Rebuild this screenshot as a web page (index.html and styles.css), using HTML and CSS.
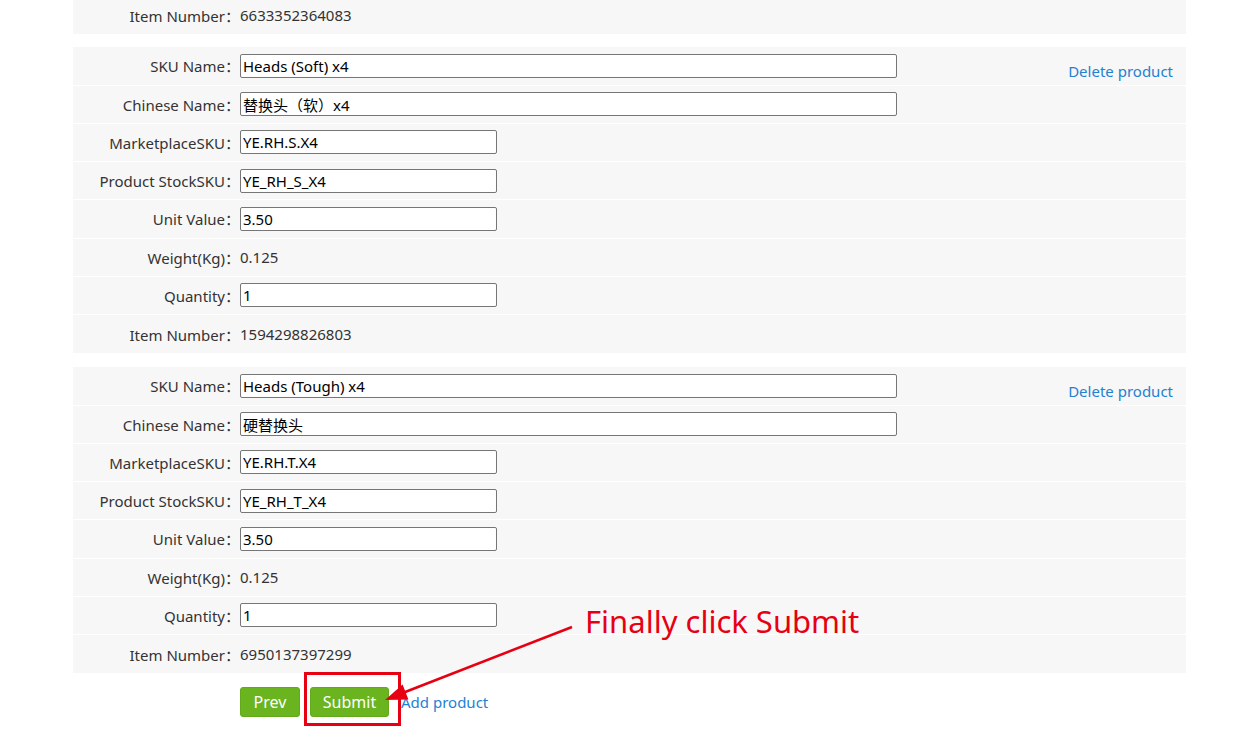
FILE: index.html
```html
<!DOCTYPE html>
<html lang="zh-CN">
<head>
    <meta charset="UTF-8">
    <title>Products</title>
    <link rel="stylesheet" href="styles.css">
</head>
<body>
    <div class="page">
        <div class="product">
            <div class="row">
                <span class="label">Item Number：</span>
                <span class="value">6633352364083</span>
            </div>
        </div>

        <div class="product">
            <div class="row">
                <span class="label">SKU Name：</span>
                <div class="value"><input class="field wide" value="Heads (Soft) x4"></div>
                <a class="delete" href="#">Delete product</a>
            </div>
            <div class="row">
                <span class="label">Chinese Name：</span>
                <div class="value"><input class="field wide" value="替换头（软）x4"></div>
            </div>
            <div class="row">
                <span class="label">MarketplaceSKU：</span>
                <div class="value"><input class="field" value="YE.RH.S.X4"></div>
            </div>
            <div class="row">
                <span class="label">Product StockSKU：</span>
                <div class="value"><input class="field" value="YE_RH_S_X4"></div>
            </div>
            <div class="row">
                <span class="label">Unit Value：</span>
                <div class="value"><input class="field" value="3.50"></div>
            </div>
            <div class="row">
                <span class="label">Weight(Kg)：</span>
                <span class="value">0.125</span>
            </div>
            <div class="row">
                <span class="label">Quantity：</span>
                <div class="value"><input class="field" value="1"></div>
            </div>
            <div class="row">
                <span class="label">Item Number：</span>
                <span class="value">1594298826803</span>
            </div>
        </div>

        <div class="product">
            <div class="row">
                <span class="label">SKU Name：</span>
                <div class="value"><input class="field wide" value="Heads (Tough) x4"></div>
                <a class="delete" href="#">Delete product</a>
            </div>
            <div class="row">
                <span class="label">Chinese Name：</span>
                <div class="value"><input class="field wide" value="硬替换头"></div>
            </div>
            <div class="row">
                <span class="label">MarketplaceSKU：</span>
                <div class="value"><input class="field" value="YE.RH.T.X4"></div>
            </div>
            <div class="row">
                <span class="label">Product StockSKU：</span>
                <div class="value"><input class="field" value="YE_RH_T_X4"></div>
            </div>
            <div class="row">
                <span class="label">Unit Value：</span>
                <div class="value"><input class="field" value="3.50"></div>
            </div>
            <div class="row">
                <span class="label">Weight(Kg)：</span>
                <span class="value">0.125</span>
            </div>
            <div class="row">
                <span class="label">Quantity：</span>
                <div class="value"><input class="field" value="1"></div>
            </div>
            <div class="row">
                <span class="label">Item Number：</span>
                <span class="value">6950137397299</span>
            </div>
        </div>

        <div class="actions">
            <button class="btn btn-prev">Prev</button>
            <button class="btn btn-submit">Submit</button>
            <a class="add" href="#">Add product</a>
        </div>
    </div>

    <!-- 标注 -->
    <svg class="marks" width="1238" height="753" viewBox="0 0 1238 753">
        <rect x="305.5" y="673.5" width="94" height="51" fill="none" stroke="#e60012" stroke-width="3"/>
        <line x1="572" y1="627" x2="400" y2="694" stroke="#e60012" stroke-width="2.5"/>
        <polygon points="385,700 402.6,684.6 408.4,699.4" fill="#e60012"/>
    </svg>
    <div class="note">Finally click Submit</div>
</body>
</html>
```

FILE: styles.css
```css
* {
    margin: 0;
    padding: 0;
    box-sizing: border-box;
}

body {
    background: #fff;
    color: #333;
    font-family: 'Noto Sans', 'Noto Sans CJK SC', sans-serif;
    font-size: 15px;
    position: relative;
    width: 1238px;
    height: 753px;
    overflow: hidden;
}

.page {
    width: 1113px;
    margin: -4px 0 0 73px;
}

.product {
    background: #f7f7f7;
    margin-bottom: 13px;
}

.product + .product {
    margin-bottom: 14px;
}

.row {
    display: grid;
    grid-template-columns: 167px 1fr auto;
    align-items: center;
    height: 38.25px;
    border-bottom: 1px solid #fff;
}

.row:last-child {
    border-bottom: none;
}

.label {
    text-align: right;
    white-space: nowrap;
}

.value {
    display: flex;
    align-items: center;
}

.field {
    width: 257px;
    height: 24px;
    border: 1px solid #767676;
    border-radius: 2px;
    padding: 0 2px;
    font-family: 'Noto Sans', 'Noto Sans CJK SC', sans-serif;
    font-size: 15px;
    color: #000;
    background: #fff;
}

.field.wide {
    width: 657px;
}

.delete {
    align-self: start;
    padding: 14px 13px 0 0;
    color: #1f80d4;
    text-decoration: none;
}

.actions {
    display: flex;
    align-items: center;
    padding-left: 167px;
}

.btn {
    height: 30px;
    margin-right: 10px;
    background: #6ab41f;
    border: 1px solid #62a91c;
    border-radius: 3px;
    color: #fff;
    font-family: 'Noto Sans', 'Noto Sans CJK SC', sans-serif;
    font-size: 16px;
}

.btn-prev {
    width: 60px;
}

.btn-submit {
    width: 79px;
}

.add {
    margin-left: 2px;
    color: #1f80d4;
    text-decoration: none;
}

.marks {
    position: absolute;
    top: 0;
    left: 0;
    pointer-events: none;
}

.note {
    position: absolute;
    left: 585px;
    top: 600px;
    color: #e60012;
    font-size: 31px;
    white-space: nowrap;
}
```
